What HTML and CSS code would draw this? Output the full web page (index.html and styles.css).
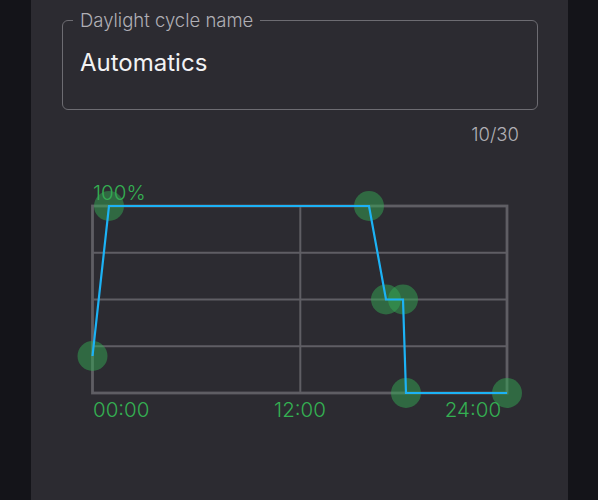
FILE: index.html
```html
<!DOCTYPE html>
<html lang="en">
<head>
    <meta charset="UTF-8">
    <meta name="viewport" content="width=device-width, initial-scale=1.0">
    <title>Daylight cycle</title>
    <link rel="stylesheet" href="styles.css">
</head>
<body>

<div class="panel">
    <!-- Name field -->
    <fieldset class="name-field">
        <legend>Daylight cycle name</legend>
        <div class="name-value">Automatics</div>
    </fieldset>
    <div class="counter">10/30</div>

    <!-- Daylight curve -->
    <svg class="chart" width="537" height="260" viewBox="31 170 537 260">
        <g class="grid">
            <line x1="92.5" y1="251.75" x2="507" y2="251.75"/>
            <line x1="92.5" y1="298.5" x2="507" y2="298.5"/>
            <line x1="92.5" y1="345.25" x2="507" y2="345.25"/>
            <line x1="300.3" y1="205" x2="300.3" y2="392"/>
            <rect class="frame" x="92.5" y="205" width="414.5" height="187"/>
        </g>
        <text class="label" x="93" y="199">100%</text>
        <g class="points">
            <circle cx="92.5" cy="355" r="15"/>
            <circle cx="109" cy="205" r="15"/>
            <circle cx="369" cy="205" r="15"/>
            <circle cx="386" cy="298.5" r="15"/>
            <circle cx="403" cy="298.5" r="15"/>
            <circle cx="406" cy="392" r="15"/>
            <circle cx="507" cy="392" r="15"/>
        </g>
        <polyline class="curve" points="92.5,355 109,205 369,205 386,298.5 403,298.5 406,392 507,392"/>
        <text class="label" x="93" y="416">00:00</text>
        <text class="label" x="300" y="416" text-anchor="middle">12:00</text>
        <text class="label" x="473" y="416" text-anchor="middle">24:00</text>
    </svg>
</div>

</body>
</html>
```

FILE: styles.css
```css
body {
    margin: 0;
    padding: 0;
    background-color: #141419;
    font-family: Inter, "Noto Sans", sans-serif;
}
.panel {
    width: 537px;
    min-height: 500px;
    margin-left: 31px;
    padding: 10px 30px 0 31px;
    box-sizing: border-box;
    background-color: #2c2b31;
}
.name-field {
    margin: 0;
    padding: 18px 17px 32px 10px;
    border: 1.5px solid #6d6c72;
    border-radius: 6px;
}
.name-field legend {
    padding: 0 7px;
    font-size: 18.5px;
    line-height: 20px;
    font-weight: 300;
    color: #b0afb5;
}
.name-value {
    padding-left: 7px;
    font-size: 24px;
    line-height: 29px;
    color: #f2f2f4;
}
.counter {
    margin-top: 14px;
    padding-right: 19px;
    text-align: right;
    font-size: 18.5px;
    line-height: 20px;
    font-weight: 300;
    color: #b0afb5;
}
.chart {
    display: block;
    margin: 27px 0 0 -31px;
}
.grid line,
.grid rect {
    stroke: #5f5e64;
    stroke-width: 2;
    fill: none;
}
.grid .frame {
    stroke-width: 2.8;
}
.points circle {
    fill: rgba(52, 168, 83, 0.5);
}
.curve {
    fill: none;
    stroke: #1cb2f5;
    stroke-width: 2.2;
    stroke-linejoin: miter;
}
.label {
    font-family: Inter, "Noto Sans", sans-serif;
    font-size: 20.5px;
    font-weight: 300;
    fill: #34b052;
}
```
